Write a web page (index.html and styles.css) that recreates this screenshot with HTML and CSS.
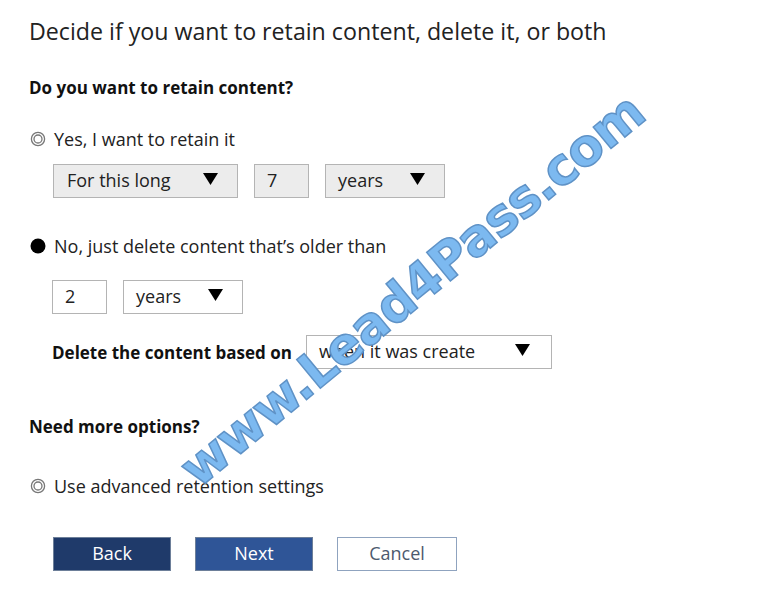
FILE: index.html
```html
<!DOCTYPE html>
<html lang="en">
<head>
    <meta charset="UTF-8">
    <title>Retention settings</title>
    <link rel="stylesheet" href="styles.css">
</head>
<body>
    <!-- BEGIN::page -->
    <main class="page">
        <h1 class="title">Decide if you want to retain content, delete it, or both</h1>

        <h2 class="question q-retain">Do you want to retain content?</h2>

        <div class="radio-row r-yes">
            <svg class="radio" width="16" height="16" viewBox="0 0 16 16"><circle cx="8" cy="8" r="6.6" fill="none" stroke="#777" stroke-width="1.3"/><circle cx="8" cy="8" r="4" fill="none" stroke="#777" stroke-width="1.3"/></svg>
            <span>Yes, I want to retain it</span>
        </div>

        <div class="field-row row-keep">
            <div class="box gray w-long">For this long<svg class="caret" width="15" height="12" viewBox="0 0 15 12"><polygon points="0,0 15,0 7.5,12" fill="#000"/></svg></div>
            <div class="box gray w-num">7</div>
            <div class="box gray w-unit">years<svg class="caret" width="15" height="12" viewBox="0 0 15 12"><polygon points="0,0 15,0 7.5,12" fill="#000"/></svg></div>
        </div>

        <div class="radio-row r-no">
            <svg class="radio" width="16" height="16" viewBox="0 0 16 16"><circle cx="8" cy="8" r="7.5" fill="#000"/></svg>
            <span>No, just delete content that’s older than</span>
        </div>

        <div class="field-row row-delete">
            <div class="box w-num">2</div>
            <div class="box w-unit">years<svg class="caret" width="15" height="12" viewBox="0 0 15 12"><polygon points="0,0 15,0 7.5,12" fill="#000"/></svg></div>
        </div>

        <div class="field-row row-based">
            <span class="label">Delete the content based on</span>
            <div class="box w-based">when it was create<svg class="caret" width="15" height="12" viewBox="0 0 15 12"><polygon points="0,0 15,0 7.5,12" fill="#000"/></svg></div>
        </div>

        <h2 class="question q-more">Need more options?</h2>

        <div class="radio-row r-adv">
            <svg class="radio" width="16" height="16" viewBox="0 0 16 16"><circle cx="8" cy="8" r="6.6" fill="none" stroke="#777" stroke-width="1.3"/><circle cx="8" cy="8" r="4" fill="none" stroke="#777" stroke-width="1.3"/></svg>
            <span>Use advanced retention settings</span>
        </div>

        <!-- BEGIN::buttons -->
        <div class="buttons">
            <button class="btn back">Back</button>
            <button class="btn next">Next</button>
            <button class="btn cancel">Cancel</button>
        </div>
        <!-- END::buttons -->
    </main>
    <!-- END::page -->

    <div class="watermark">www.Lead4Pass.com</div>
</body>
</html>
```

FILE: styles.css
```css
*{
    margin: 0;
    padding: 0;
    box-sizing: border-box;
    font-family: 'Open Sans', 'Liberation Sans', sans-serif;
}

body{
    width: 760px;
    height: 601px;
    background: #fff;
    color: #1a1a1a;
    position: relative;
    overflow: hidden;
}

.page{
    display: flex;
    flex-direction: column;
    align-items: flex-start;
    padding: 16px 0 0 29px;
}

.title{
    font-size: 23.2px;
    font-weight: 400;
    line-height: 30px;
    color: #222;
}

.question{
    font-size: 17px;
    font-weight: 700;
    line-height: 22px;
    color: #111;
}

.q-retain{
    margin-top: 31px;
}

.q-more{
    margin-top: 47px;
}

.radio-row{
    display: flex;
    align-items: center;
    gap: 8px;
    font-size: 18px;
    line-height: 22px;
    color: #222;
    margin-left: 1px;
}

.radio{
    flex: none;
}

.r-yes{
    margin-top: 29px;
}

.r-no{
    margin-top: 37px;
}

.r-adv{
    margin-top: 37px;
}

.field-row{
    display: flex;
    align-items: center;
    gap: 16px;
    margin-left: 24px;
}

.row-keep{
    margin-top: 14px;
}

.row-delete{
    margin-top: 23px;
    margin-left: 23px;
}

.row-based{
    margin-top: 21px;
    margin-left: 23px;
    gap: 14px;
}

.label{
    font-size: 17px;
    font-weight: 700;
    color: #111;
}

.box{
    height: 34px;
    display: flex;
    align-items: center;
    justify-content: space-between;
    padding: 0 19px 2px 12px;
    border: 1.5px solid #b4b4b4;
    background: #fff;
    font-size: 18px;
    color: #222;
}

.box.gray{
    background: #ececec;
}

.caret{
    flex: none;
    margin-top: -2px;
}

.w-long{
    width: 185px;
    padding-left: 13px;
}

.w-num{
    width: 55px;
}

.w-unit{
    width: 120px;
}

.w-based{
    width: 246px;
    padding-right: 21px;
}

.buttons{
    display: flex;
    gap: 24px;
    margin: 40px 0 0 24px;
}

.btn{
    width: 118px;
    height: 34px;
    border: 1.5px solid #6d7f99;
    font-size: 18px;
    color: #fff;
    padding-bottom: 2px;
}

.back{
    background: #1f3a6a;
}

.next{
    background: #2f5597;
}

.cancel{
    width: 120px;
    background: #fff;
    color: #4d5a6e;
    border-color: #8fa3bf;
}

/* watermark lies over the form */
.watermark{
    position: absolute;
    left: 412px;
    top: 290px;
    transform: translate(-50%, -50%) rotate(-39.5deg);
    font-family: 'DejaVu Sans', sans-serif;
    font-weight: 700;
    font-size: 51px;
    letter-spacing: -1px;
    white-space: nowrap;
    color: #7cb9f0;
    -webkit-text-stroke: 1.5px #5f92c6;
    pointer-events: none;
}
```
